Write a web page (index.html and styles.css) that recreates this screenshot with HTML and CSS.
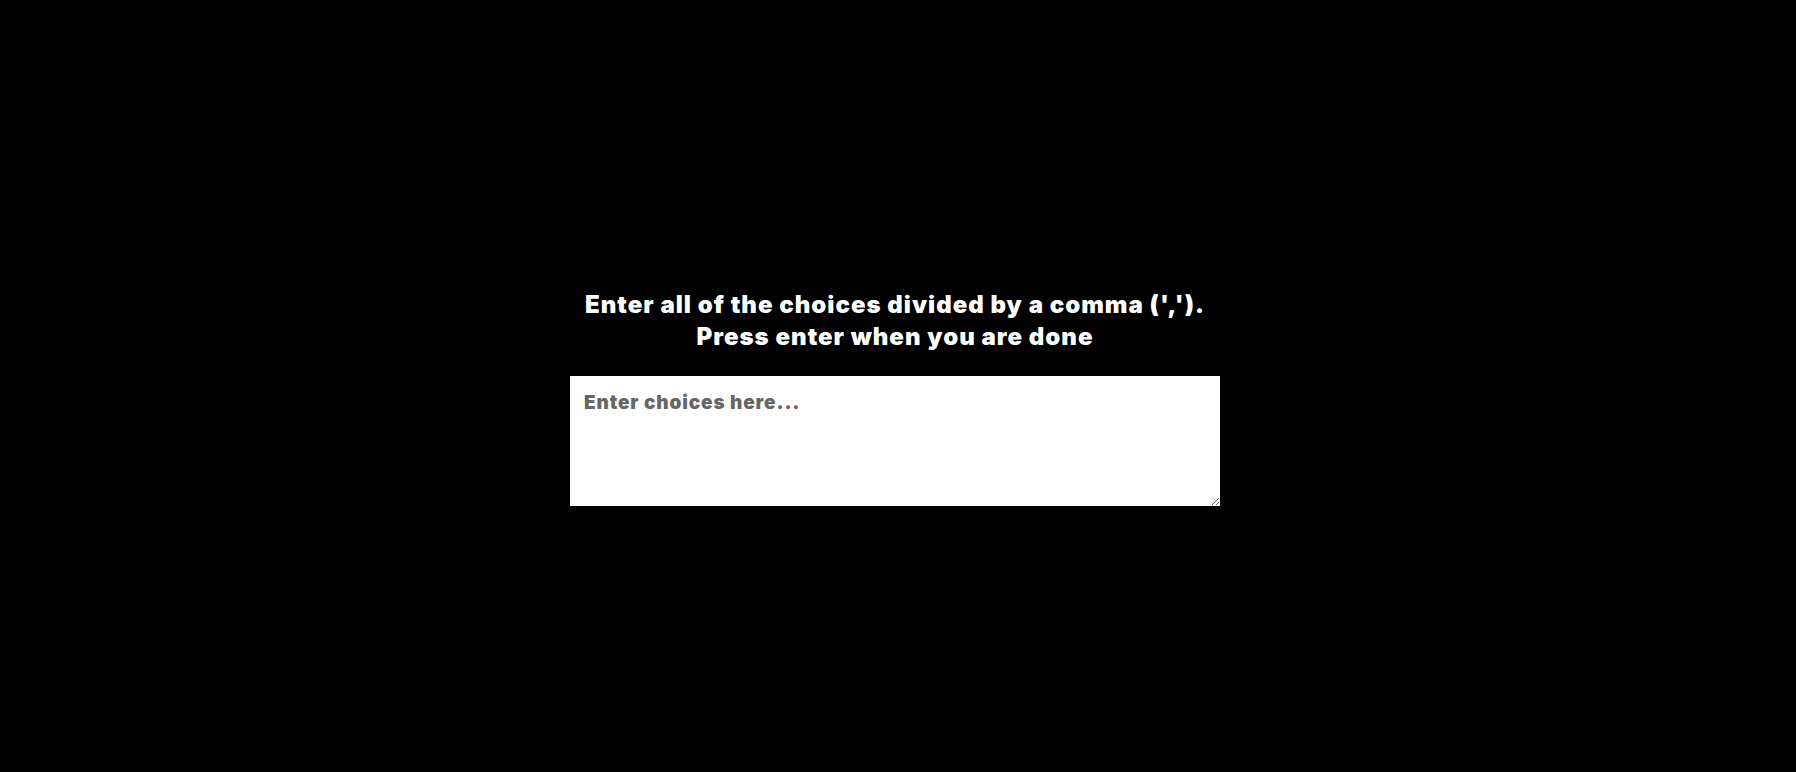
FILE: index.html
```html
<!DOCTYPE html>
<html lang="en">
<head>
<meta charset="utf-8">
<title>Choices</title>
<link rel="stylesheet" href="styles.css">
</head>
<body>
<main class="page">
  <h1 class="prompt">Enter all of the choices divided by a comma (',').<br>Press enter when you are done</h1>
  <textarea class="choices" placeholder="Enter choices here..." autofocus></textarea>
</main>
</body>
</html>
```

FILE: styles.css
```css
html, body {
  margin: 0;
  height: 100%;
  background: #000;
}
.page {
  height: 100%;
  box-sizing: border-box;
  padding-top: 21px;
  padding-right: 6px;
  display: flex;
  flex-direction: column;
  align-items: center;
  justify-content: center;
  font-family: Inter, "Liberation Sans", sans-serif;
}
.prompt {
  margin: 0 0 23px;
  padding-top: 2px;
  color: #fff;
  font-size: 24px;
  line-height: 32px;
  font-weight: 900;
  text-align: center;
  letter-spacing: 1px;
}
.choices {
  width: 650px;
  height: 130px;
  box-sizing: border-box;
  border: none;
  outline: none;
  padding: 15px 14px;
  margin: 0;
  background: #fff;
  font-family: Inter, "Liberation Sans", sans-serif;
  font-weight: 900;
  font-size: 19px;
  letter-spacing: 0.85px;
  color: #222;
  resize: both;
}
.choices::placeholder {
  color: #666;
}
```
